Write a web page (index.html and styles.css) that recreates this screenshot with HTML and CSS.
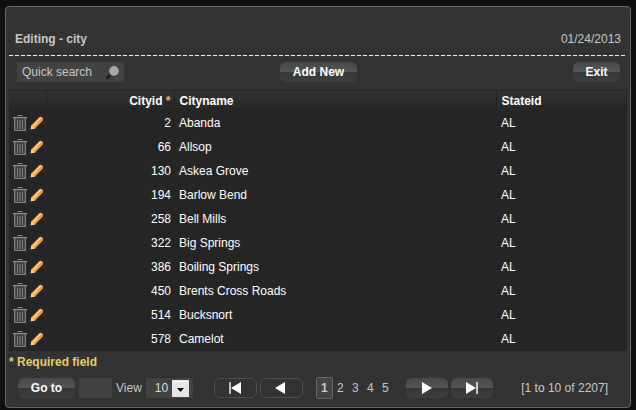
FILE: index.html
```html
<!DOCTYPE html>
<html lang="en">
<head>
<meta charset="utf-8">
<title>Editing - city</title>
<link rel="stylesheet" href="styles.css">
</head>
<body>
<svg class="sprite" aria-hidden="true">
  <symbol id="trash" viewBox="0 0 14 16">
    <path d="M5 1.500V.5h4v1" fill="none" stroke="#858585"/>
    <path d="M0 2h14v1.500H0z" fill="#929292"/>
    <path d="M1.700 3.500v11.800h10.600V3.500" fill="#303030" stroke="#858585" stroke-width="1.300"/>
    <path d="M4.500 4.500v9.500M7 4.500v9.500M9.500 4.500v9.500" stroke="#7c7c7c" stroke-width="1.300"/>
  </symbol>
  <symbol id="pencil" viewBox="0 0 14 14">
    <path d="M.8 13.200l.4-3.800L9 1.400q1.600-1.400 3.200-.2t.6 3.200L5.200 12.400z" fill="#ec9a38"/>
    <path d="M2.200 9.800L9.800 1.800q1-.6 1.800.2L4 10.600z" fill="#ffd48c"/>
    <path d="M.8 13.200l.4-3.800L5.200 12.400z" fill="#f6dcc4"/>
  </symbol>
</svg>
<main class="panel">
  <header class="heading">
    <h1 class="title">Editing - city</h1>
    <span class="date">01/24/2013</span>
  </header>
  <div class="toolbar">
    <form class="search">
      <input class="search-text" type="text" value="Quick search" aria-label="Quick search">
      <button class="search-button" type="button" aria-label="Search">
        <svg width="15" height="15" viewBox="0 0 15 15"><path d="M6 9L2.500 12.500" stroke="#1c1c1c" stroke-width="3" stroke-linecap="round"/><circle cx="9" cy="6" r="5.500" fill="#2c2c2c"/><circle cx="9" cy="6" r="4.900" fill="#a8a8a8"/></svg>
      </button>
    </form>
    <button class="button add" type="button">Add New</button>
    <button class="button exit" type="button">Exit</button>
  </div>
  <table class="grid">
    <colgroup><col class="col-actions"><col class="col-id"><col class="col-name"><col class="col-state"></colgroup>
    <thead>
      <tr><th aria-label="Actions"></th><th class="number">Cityid <span class="star">*</span></th><th>Cityname</th><th>Stateid</th></tr>
    </thead>
    <tbody id="rows"></tbody>
  </table>
  <p class="required">* Required field</p>
  <footer class="pager">
    <div class="tools">
      <button class="button goto" type="button">Go to</button>
      <input class="page-input" type="text" aria-label="Page number">
      <label class="view-label" for="view">View</label>
      <span class="view">
        <select id="view"><option>10</option><option>20</option><option>50</option></select>
        <svg class="arrow" width="17" height="17" viewBox="0 0 17 17" aria-hidden="true"><path d="M0 0h17v17H0z" fill="#e6e6e6"/><path d="M1 1h15v1H1z" fill="#fff"/><path d="M5 8h7l-3.500 4z" fill="#111"/></svg>
      </span>
    </div>
    <nav class="pages" aria-label="Pages">
      <button class="step outline" type="button" aria-label="First page"><svg width="14" height="12" viewBox="0 0 14 12"><path d="M1 0h2v12H1z" fill="#bbb"/><path d="M13 0v12L3 6z"/></svg></button>
      <button class="step outline" type="button" aria-label="Previous page"><svg width="14" height="12" viewBox="0 0 14 12"><path d="M11 0v12L1 6z"/></svg></button>
      <span class="numbers"><a class="current" href="#1">1</a><a href="#2">2</a><a href="#3">3</a><a href="#4">4</a><a href="#5">5</a></span>
      <button class="step button" type="button" aria-label="Next page"><svg width="14" height="12" viewBox="0 0 14 12"><path d="M2 0v12l10-6z"/></svg></button>
      <button class="step button" type="button" aria-label="Last page"><svg width="14" height="12" viewBox="0 0 14 12"><path d="M1 0v12l10-6z"/><path d="M11 0h2v12h-2z" fill="#ccc"/></svg></button>
    </nav>
    <span class="range">[1 to 10 of 2207]</span>
  </footer>
</main>
<script src="rows.js"></script>
</body>
</html>
```
FILE: styles.css
```css
* { box-sizing: border-box; }
body {
  margin: 0;
  padding: 6px 5px 3px;
  background: #101010;
  color: #c8c8c8;
  font: 12px/16px "Liberation Sans", Arial, sans-serif;
}
button, input, select { font: inherit; color: inherit; margin: 0; border: 0; padding: 0; }
button { cursor: pointer; }
svg { display: block; }
.sprite { position: absolute; width: 0; height: 0; }
.panel {
  padding: 0 3px 8px;
  background: #333;
  border: 1px solid #686868;
  border-radius: 4px;
}
.heading {
  display: flex;
  justify-content: space-between;
  align-items: center;
  padding: 24px 6px 8px;
}
.title { margin: 0; font-size: 12px; }
.toolbar {
  display: grid;
  grid-template-columns: 1fr auto 1fr;
  align-items: center;
  padding: 7px 7px 8px 8px;
  background: repeating-linear-gradient(90deg, #eee 0 4px, transparent 4px 6px) top / 100% 1px no-repeat;
}
.search { display: flex; align-items: center; width: 107px; height: 20px; background: #424242; }
.search-text { width: 88px; height: 20px; padding-left: 5px; background: none; }
.search-button { flex: none; background: none; }
.button {
  height: 20px;
  border-radius: 6px;
  background: linear-gradient(#484848, #555 50%, #34383a 50%, #3e3e3e);
  color: #fff;
  font-weight: bold;
}
.add { width: 77px; }
.exit { width: 47px; justify-self: end; }
.grid { width: 100%; table-layout: fixed; border-collapse: collapse; background: #252525; color: #fff; }
.grid thead { background: linear-gradient(#333, #252525); }
.grid th { height: 20px; padding: 0 5px; text-align: left; border-top: 1px solid #222; border-right: 1px solid #222; }
.grid td { height: 24px; padding: 0 5px; }
.grid .number { text-align: right; padding-right: 3px; }
.grid td.actions { padding: 0 0 0 4px; }
.col-actions { width: 37px; }
.col-id { width: 128px; }
.col-name { width: 322px; }
.star { color: #f0b45a; }
.row-actions { display: flex; align-items: center; gap: 3px; }
.row-actions button { background: none; }
.required { margin: 3px 0 7px; color: #e4ce62; font-weight: bold; }
.pager { display: flex; align-items: center; height: 22px; padding: 0 19px 0 9px; }
.tools { display: flex; align-items: center; gap: 4px; }
.goto { width: 57px; }
.page-input { width: 33px; height: 20px; background: #424242; }
.view { position: relative; width: 47px; height: 20px; }
.view select { appearance: none; width: 47px; height: 20px; padding-left: 9px; background: #424242; color: #ddd; border-radius: 0; }
.arrow { position: absolute; right: 4px; top: 2px; pointer-events: none; }
.pages { display: flex; align-items: center; gap: 3px; margin-left: 21px; }
.range { margin-left: auto; }
.step { display: grid; place-items: center; width: 42px; height: 20px; border-radius: 6px; fill: #fff; }
.outline { width: 43px; background: #333; border: 1px solid #505050; }
.numbers { display: flex; align-items: center; padding: 0 10px; }
.numbers a { width: 15px; color: inherit; text-align: center; text-decoration: none; }
.numbers .current { width: 17px; padding: 2px 0; border: 1px solid #696969; border-radius: 2px; background: #444; font-weight: bold; }
```
FILE: rows.js
```js
const cities = [
  [2, "Abanda"], [66, "Allsop"], [130, "Askea Grove"], [194, "Barlow Bend"],
  [258, "Bell Mills"], [322, "Big Springs"], [386, "Boiling Springs"],
  [450, "Brents Cross Roads"], [514, "Bucksnort"], [578, "Camelot"]
];
document.getElementById("rows").innerHTML = cities.map(([id, name]) => `
  <tr>
    <td class="actions"><div class="row-actions">
      <button type="button" aria-label="Delete ${name}"><svg width="14" height="16"><use href="#trash"/></svg></button>
      <button type="button" aria-label="Edit ${name}"><svg width="14" height="14"><use href="#pencil"/></svg></button>
    </div></td>
    <td class="number">${id}</td><td>${name}</td><td>AL</td>
  </tr>`).join("");
```
